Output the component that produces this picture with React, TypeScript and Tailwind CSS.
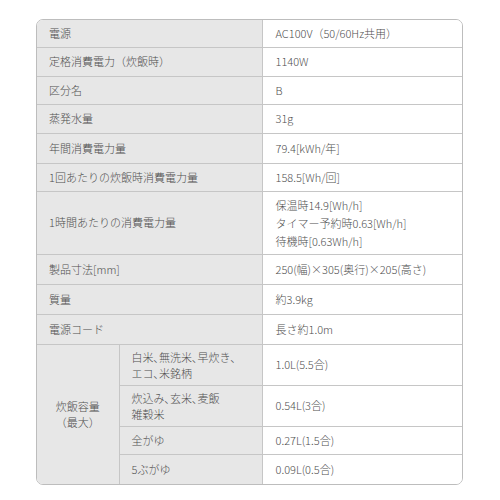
import React from 'react';

type Row = { label: string; value: React.ReactNode; h: number };

const rows: Row[] = [
  { label: '電源', value: 'AC100V（50/60Hz共用）', h: 27 },
  { label: '定格消費電力（炊飯時）', value: '1140W', h: 29 },
  { label: '区分名', value: 'B', h: 28 },
  { label: '蒸発水量', value: '31g', h: 29 },
  { label: '年間消費電力量', value: '79.4[kWh/年]', h: 30 },
  { label: '1回あたりの炊飯時消費電力量', value: '158.5[Wh/回]', h: 28 },
  {
    label: '1時間あたりの消費電力量',
    value: (
      <div className="leading-[18px]">
        保温時14.9[Wh/h]
        <br />
        タイマー予約時0.63[Wh/h]
        <br />
        待機時[0.63Wh/h]
      </div>
    ),
    h: 63,
  },
  { label: '製品寸法[mm]', value: '250(幅)×305(奥行)×205(高さ)', h: 30 },
  { label: '質量', value: '約3.9kg', h: 30 },
  { label: '電源コード', value: '長さ約1.0m', h: 30 },
];

const capacity = [
  { kind: ['白米､無洗米､早炊き､', 'エコ､米銘柄'], value: '1.0L(5.5合)', h: 41 },
  { kind: ['炊込み､玄米､麦飯', '雑穀米'], value: '0.54L(3合)', h: 41 },
  { kind: ['全がゆ'], value: '0.27L(1.5合)', h: 28 },
  { kind: ['5ぶがゆ'], value: '0.09L(0.5合)', h: 30 },
];

const labelCls = 'bg-[#e7e7e7] border border-[#c6c6c6] px-3 align-middle';
const valueCls = 'bg-white border border-[#c6c6c6] px-[13px] align-middle';

export default function App() {
  return (
    <div
      className="w-[500px] h-[500px] bg-white pt-[19px] pl-[36px] text-[11px] font-light text-[#4f4f4f]"
      style={{ fontFamily: '"Noto Sans CJK JP", "Noto Sans", sans-serif' }}
    >
      <div className="w-[427px] rounded-[7px] border border-[#bdbdbd] overflow-hidden">
        <table className="w-full border-collapse border-hidden table-fixed">
          <colgroup>
            <col className="w-[82px]" />
            <col className="w-[143px]" />
            <col />
          </colgroup>
          <tbody>
            {rows.map((r, i) => (
              <tr key={i} style={{ height: r.h }}>
                <td colSpan={2} className={labelCls}>
                  {r.label}
                </td>
                <td className={valueCls}>{r.value}</td>
              </tr>
            ))}
            {capacity.map((c, i) => (
              <tr key={'c' + i} style={{ height: c.h }}>
                {i === 0 && (
                  <td rowSpan={4} className={labelCls + ' text-center leading-[16px]'}>
                    炊飯容量
                    <br />
                    （最大）
                  </td>
                )}
                <td className={labelCls + ' leading-[16px] whitespace-nowrap'}>
                  {c.kind.map((k, j) => (
                    <div key={j}>{k}</div>
                  ))}
                </td>
                <td className={valueCls}>{c.value}</td>
              </tr>
            ))}
          </tbody>
        </table>
      </div>
    </div>
  );
}
